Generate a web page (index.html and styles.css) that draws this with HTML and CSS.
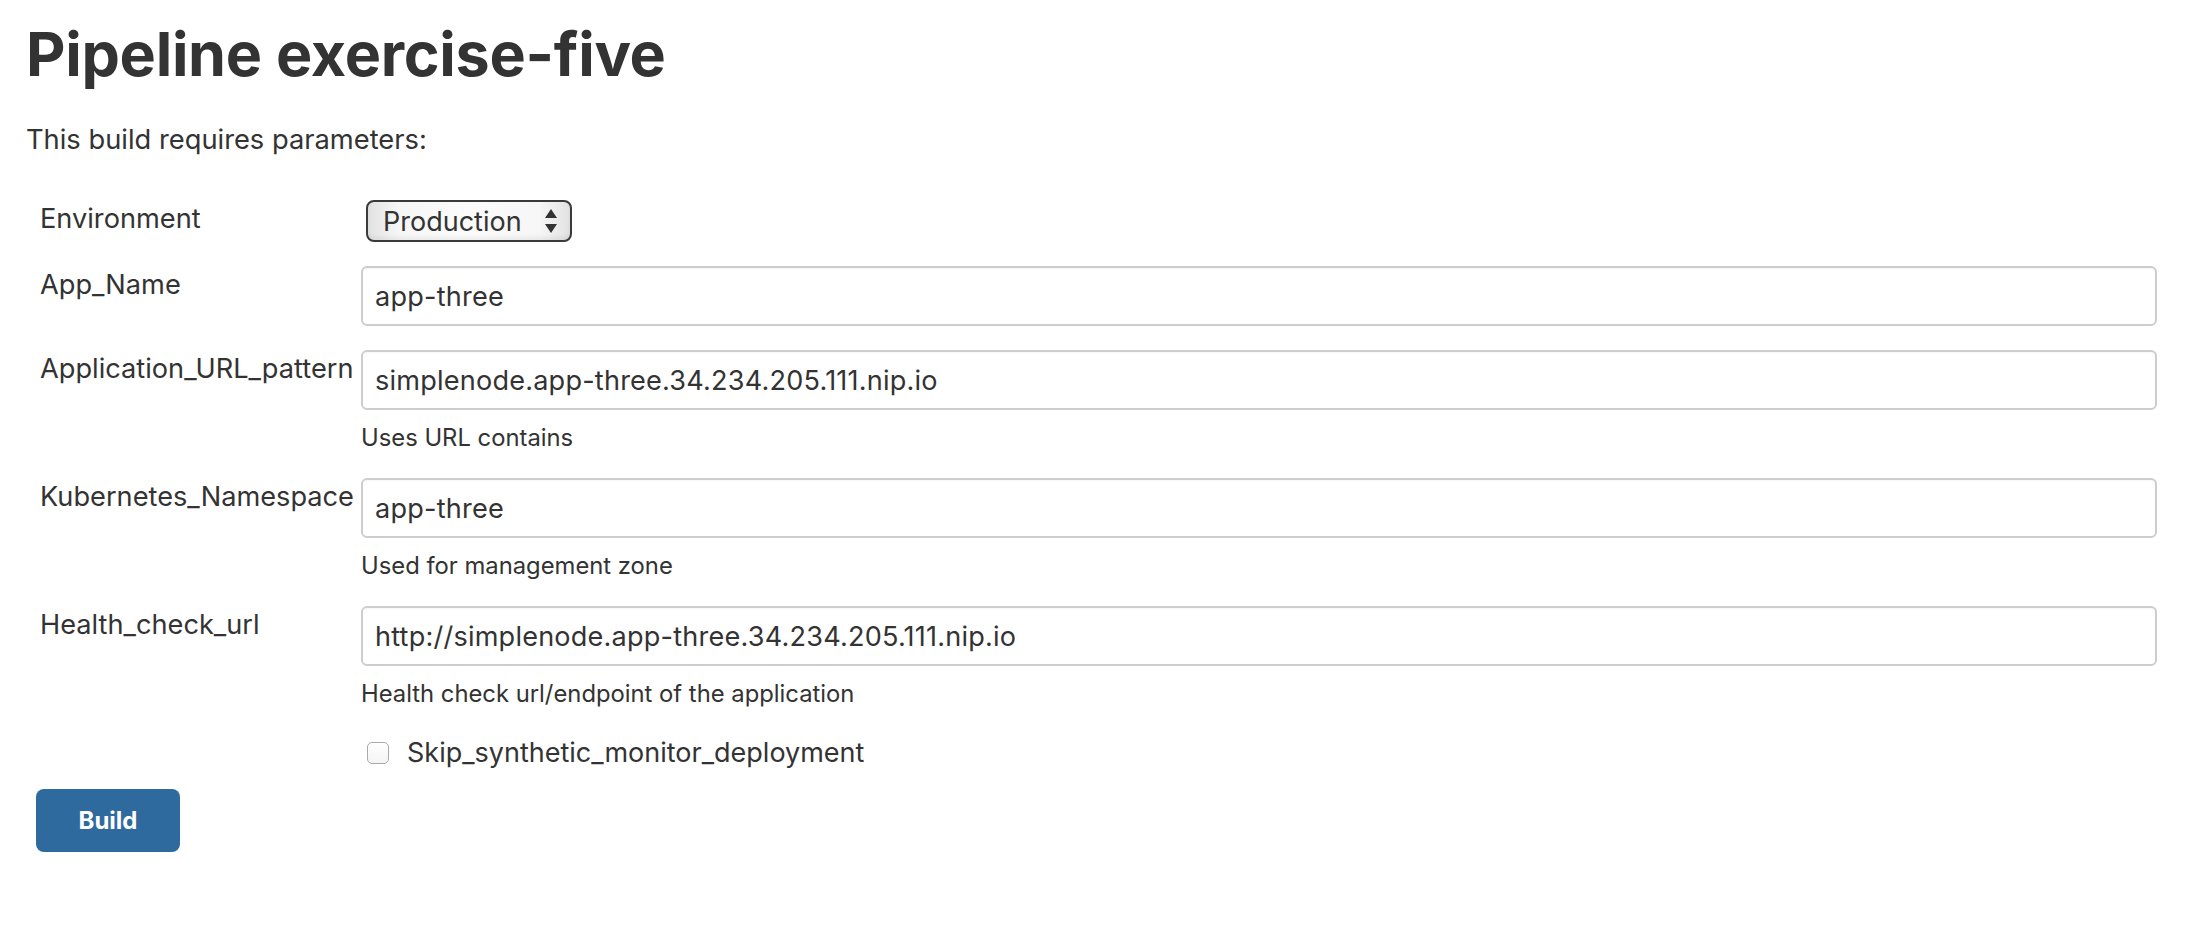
FILE: index.html
```html
<!DOCTYPE html>
<html lang="en">
<head>
<meta charset="utf-8">
<title>Pipeline exercise-five</title>
<link rel="stylesheet" href="styles.css">
</head>
<body>
<div class="page">
  <h1 class="title">Pipeline exercise-five</h1>
  <p class="intro">This build requires parameters:</p>
  <form class="params">
    <div class="param">
      <label class="param-label">Environment</label>
      <div class="param-field">
        <div class="select-wrap">
          <select class="select">
            <option>Production</option>
          </select>
          <svg class="select-arrows" width="14" height="26" viewBox="0 0 14 26"><path d="M7 1 L13 10 L1 10 Z" fill="#333"/><path d="M1 16 L13 16 L7 25 Z" fill="#333"/></svg>
        </div>
      </div>
    </div>
    <div class="param">
      <label class="param-label">App_Name</label>
      <div class="param-field">
        <input class="text-input" type="text" value="app-three">
      </div>
    </div>
    <div class="param">
      <label class="param-label">Application_URL_pattern</label>
      <div class="param-field">
        <input class="text-input" type="text" value="simplenode.app-three.34.234.205.111.nip.io">
        <div class="help">Uses URL contains</div>
      </div>
    </div>
    <div class="param">
      <label class="param-label">Kubernetes_Namespace</label>
      <div class="param-field">
        <input class="text-input" type="text" value="app-three">
        <div class="help">Used for management zone</div>
      </div>
    </div>
    <div class="param">
      <label class="param-label">Health_check_url</label>
      <div class="param-field">
        <input class="text-input" type="text" value="http://simplenode.app-three.34.234.205.111.nip.io">
        <div class="help">Health check url/endpoint of the application</div>
      </div>
    </div>
    <div class="param">
      <span class="param-label"></span>
      <div class="param-field">
        <label class="check-row"><span class="checkbox"></span><span class="check-text">Skip_synthetic_monitor_deployment</span></label>
      </div>
    </div>
  </form>
  <div class="actions">
    <button class="build-btn" type="button">Build</button>
  </div>
</div>
</body>
</html>
```

FILE: styles.css
```css
html, body {
  margin: 0;
  padding: 0;
  background: #fff;
}

body {
  font-family: Inter, "Liberation Sans", Arial, sans-serif;
  color: #333;
}

.page {
  padding: 18px 29px 40px 26px;
}

.title {
  margin: 0;
  font-size: 61px;
  line-height: 72px;
  font-weight: 700;
  color: #333;
  letter-spacing: -0.3px;
}

.intro {
  margin: 31px 0 0 0;
  font-size: 27.3px;
  line-height: 38px;
}

.params {
  margin: 41px 0 0 14px;
  display: flex;
  flex-direction: column;
  gap: 24px;
}

.param {
  display: grid;
  grid-template-columns: 321px 1fr;
  align-items: start;
}

.param-label {
  font-size: 27.2px;
  line-height: 37px;
  white-space: nowrap;
}

.param-field {
  display: flex;
  flex-direction: column;
  align-items: stretch;
}

.select-wrap {
  position: relative;
  align-self: flex-start;
  margin-left: 5px;
}

.select {
  appearance: none;
  -webkit-appearance: none;
  width: 206px;
  height: 42px;
  border: 2px solid #3a3a3a;
  border-radius: 8px;
  background: linear-gradient(90deg, #e2e2e2 0%, #f6f6f6 15%, #fbfbfb 50%, #f6f6f6 85%, #e2e2e2 100%);
  box-shadow: inset 0 -3px 4px rgba(0,0,0,0.06);
  font-family: Inter, "Liberation Sans", Arial, sans-serif;
  font-size: 27px;
  color: #333;
  padding: 0 0 0 15px;
  margin: 0;
}

.select-arrows {
  position: absolute;
  right: 14px;
  top: 8px;
  pointer-events: none;
}

.text-input {
  box-sizing: border-box;
  height: 60px;
  width: 100%;
  border: 2px solid #cdcdcd;
  border-radius: 6px;
  padding: 0 12px;
  margin: 0;
  font-family: Inter, "Liberation Sans", Arial, sans-serif;
  font-size: 27.1px;
  letter-spacing: 0.2px;
  color: #333;
  background: #fff;
  box-shadow: inset 0 1px 2px rgba(0,0,0,0.04);
}

.help {
  margin-top: 12px;
  font-size: 23.8px;
  line-height: 32px;
  color: #333;
}

.check-row {
  display: flex;
  align-items: center;
  gap: 18px;
  height: 38px;
  padding-left: 6px;
}

.checkbox {
  box-sizing: border-box;
  width: 22px;
  height: 22px;
  border: 1.5px solid #a9a9a9;
  border-radius: 5px;
  background: linear-gradient(#fff, #f4f4f4);
}

.check-text {
  font-size: 27px;
  line-height: 38px;
}

.actions {
  margin: 17px 0 0 10px;
}

.build-btn {
  width: 144px;
  height: 63px;
  border: none;
  border-radius: 8px;
  background: #2e6a9e;
  color: #fff;
  font-family: Inter, "Liberation Sans", Arial, sans-serif;
  font-weight: 700;
  font-size: 24px;
  padding: 0;
}
```
